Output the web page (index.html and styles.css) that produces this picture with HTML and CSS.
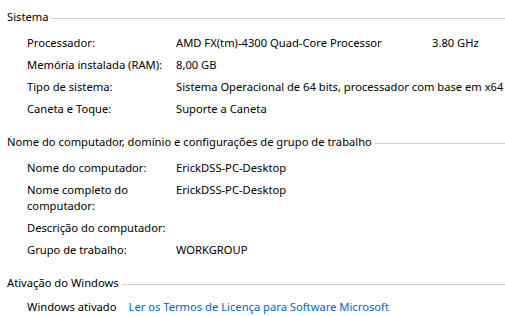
FILE: index.html
```html
<!DOCTYPE html>
<html lang="pt-BR">
<head>
    <meta charset="UTF-8">
    <title>Sistema</title>
    <link rel="stylesheet" href="styles.css">
</head>
<body>
    <div class="section">
        <h2 class="section-title">Sistema</h2>
        <div class="rows">
            <div class="row">
                <span class="label">Processador:</span>
                <span class="value cpu"><span>AMD FX(tm)-4300 Quad-Core Processor</span><span class="speed">3.80 GHz</span></span>
            </div>
            <div class="row">
                <span class="label">Memória instalada (RAM):</span>
                <span class="value">8,00 GB</span>
            </div>
            <div class="row">
                <span class="label">Tipo de sistema:</span>
                <span class="value">Sistema Operacional de 64 bits, processador com base em x64</span>
            </div>
            <div class="row">
                <span class="label">Caneta e Toque:</span>
                <span class="value">Suporte a Caneta</span>
            </div>
        </div>
    </div>

    <div class="section">
        <h2 class="section-title">Nome do computador, domínio e configurações de grupo de trabalho</h2>
        <div class="rows">
            <div class="row">
                <span class="label">Nome do computador:</span>
                <span class="value">ErickDSS-PC-Desktop</span>
            </div>
            <div class="row">
                <span class="label">Nome completo do computador:</span>
                <span class="value">ErickDSS-PC-Desktop</span>
            </div>
            <div class="row">
                <span class="label">Descrição do computador:</span>
                <span class="value"></span>
            </div>
            <div class="row">
                <span class="label">Grupo de trabalho:</span>
                <span class="value">WORKGROUP</span>
            </div>
        </div>
    </div>

    <div class="section">
        <h2 class="section-title">Ativação do Windows</h2>
        <div class="activation">
            <span>Windows ativado</span>
            <a href="#">Ler os Termos de Licença para Software Microsoft</a>
        </div>
    </div>
</body>
</html>
```

FILE: styles.css
```css
body {
    margin: 0;
    padding: 9px 0 0 7px;
    font-family: "Segoe UI", "Noto Sans", sans-serif;
    font-size: 11.2px;
    line-height: 16px;
    color: #000;
    background: #fff;
    overflow: hidden;
}

.section {
    margin-bottom: 14px;
}

.section-title {
    display: flex;
    align-items: center;
    margin: 0;
    font-size: 11.2px;
    font-weight: normal;
    white-space: nowrap;
}

.section-title::after {
    content: "";
    flex: 1;
    height: 1px;
    margin: 3px 0 0 3px;
    background: #d0d0d0;
}

.rows {
    padding: 7px 0 0 20px;
}

.row {
    display: grid;
    grid-template-columns: 149px 1fr;
    padding: 3px 0;
}

.value {
    white-space: nowrap;
}

.cpu {
    display: flex;
}

.cpu span:first-child {
    width: 256px;
}

.activation {
    display: flex;
    gap: 12px;
    padding: 8px 0 0 20px;
}

.activation a {
    color: #0066cc;
    text-decoration: none;
}
```
